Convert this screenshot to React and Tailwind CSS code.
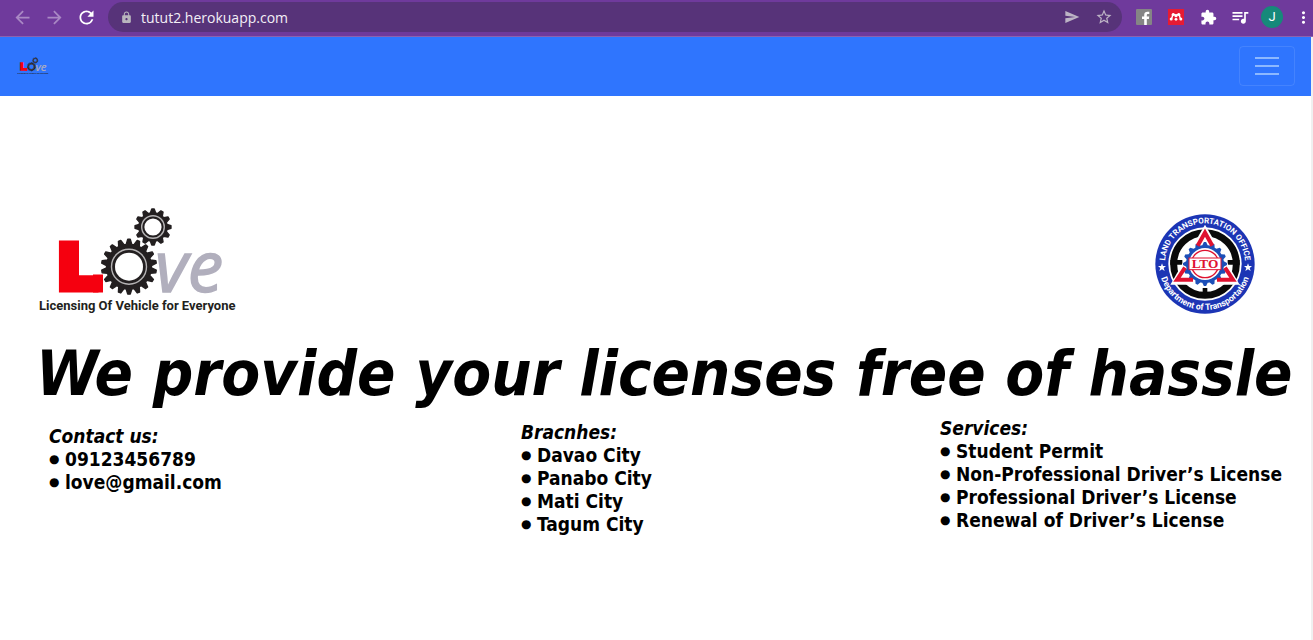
import React, { useId } from "react";
import {
  MdArrowBack, MdArrowForward, MdRefresh, MdLock, MdSend, MdStarBorder,
  MdExtension, MdQueueMusic, MdMoreVert,
} from "react-icons/md";

// Outline of a toothed wheel with tapered teeth.
function gearPath(cx, cy, teeth, outer, inner) {
  const step = (Math.PI * 2) / teeth;
  const points = [];
  for (let i = 0; i < teeth; i++) {
    const a = i * step - Math.PI / 2;
    [[-0.36, inner], [-0.13, outer], [0.13, outer], [0.36, inner]].forEach(([f, r]) => {
      points.push(`${(cx + r * Math.cos(a + f * step)).toFixed(2)} ${(cy + r * Math.sin(a + f * step)).toFixed(2)}`);
    });
  }
  return `M${points.join("L")}Z`;
}

function Gear({ cx, cy, teeth, outer, inner, ring, hole, holeFill }) {
  return (
    <g>
      <path d={gearPath(cx, cy, teeth, outer, inner)} fill="#231f20" stroke="#231f20" strokeWidth="1.4" strokeLinejoin="round" />
      <circle cx={cx} cy={cy} r={ring} fill="none" stroke="#b5b3b4" strokeWidth="1.4" />
      <circle cx={cx} cy={cy} r={hole} fill={holeFill} />
    </g>
  );
}

function LoveLogo({ className, holeFill = "#fff" }) {
  return (
    <svg viewBox="0 0 200 110" className={className} role="img" aria-label="Love">
      <text x="19" y="81" fontFamily="'DejaVu Sans', sans-serif" fontWeight="700" fontSize="59" fill="#f5000f" stroke="#f5000f" strokeWidth="9" strokeLinejoin="miter">L</text>
      <rect x="54" y="67.500" width="10" height="18" fill="#f5000f" />
      <text x="116" y="85" fontFamily="'Open Sans', sans-serif" fontStyle="italic" fontSize="71" fill="#b1afbd" stroke="#b1afbd" strokeWidth="1.5">ve</text>
      <Gear cx={90} cy={59.7} teeth={18} outer={27.5} inner={22.5} ring={17.5} hole={14} holeFill={holeFill} />
      <Gear cx={114} cy={20} teeth={12} outer={18} inner={14.2} ring={11.3} hole={8.6} holeFill={holeFill} />
      <text x="0" y="103" fontFamily="Roboto, sans-serif" fontWeight="700" fontSize="13" fill="#231f20">Licensing Of Vehicle for Everyone</text>
    </svg>
  );
}

function LtoSeal({ className }) {
  const id = useId();
  return (
    <svg viewBox="-150 -150 300 300" className={className} role="img" aria-label="Land Transportation Office">
      <defs>
        <path id={`${id}t`} d="M-118 20A120 120 0 1 1 118 20" />
        <path id={`${id}b`} d="M-138 0A138 138 0 0 0 138 0" />
      </defs>
      <circle r="149" fill="#1c35b5" />
      <circle r="110" fill="#fff" />
      <circle r="94" fill="none" stroke="#0a0a0a" strokeWidth="21" />
      <path d="M-104 -5H-68M68 -5H104" stroke="#0a0a0a" strokeWidth="14" />
      <path d="M0 -118L104 62H-104Z" fill="#fff" />
      <path d="M0 72V94" stroke="#0a0a0a" strokeWidth="14" />
      <path d={gearPath(0, 0, 16, 66, 57)} fill="#1c4fb8" />
      <circle r="48" fill="#fff" />
      <g fill="none" stroke="#df1230" strokeWidth="12">
        <path d="M-22 -55L0 -94L22 -55" />
        <path d="M-60 11L-84 47H-36" />
        <path d="M60 11L84 47H36" />
      </g>
      <circle r="41" fill="none" stroke="#df1230" strokeWidth="4" />
      <rect x="-48" y="-18" width="96" height="35" fill="#fff" stroke="#df1230" strokeWidth="3" />
      <text x="0" y="13" textAnchor="middle" fontFamily="'Liberation Serif', serif" fontWeight="700" fontSize="40" fill="#df1230">LTO</text>
      <g fill="#fff" fontFamily="Roboto, sans-serif" fontWeight="700" textAnchor="middle">
        <text fontSize="24"><textPath href={`#${id}t`} startOffset="50%">LAND TRANSPORTATION OFFICE</textPath></text>
        <text fontSize="26"><textPath href={`#${id}b`} startOffset="50%">Department of Transportation</textPath></text>
      </g>
      <g fill="#fff">
        <path id={`${id}s`} d="M-129 -2l3 8h9l-7 6 3 9-8-5-8 5 3-9-7-6h9z" />
        <use href={`#${id}s`} x="258" />
      </g>
    </svg>
  );
}

function ToolButton({ label, className = "", children }) {
  return (
    <button type="button" aria-label={label} className={`flex h-8 w-8 shrink-0 items-center justify-center ${className}`}>
      {children}
    </button>
  );
}

function BrowserBar() {
  return (
    <header className="flex h-[37px] items-center border-b border-[#8b62ae] bg-[#6f3a9c] pb-0.5 pl-1.5 text-white">
      <ToolButton label="Back" className="text-[#a988c4]"><MdArrowBack size={21} /></ToolButton>
      <ToolButton label="Forward" className="text-[#a988c4]"><MdArrowForward size={21} /></ToolButton>
      <ToolButton label="Reload"><MdRefresh size={21} /></ToolButton>
      <div className="mx-1.5 flex h-[30px] min-w-0 flex-1 items-center rounded-full bg-[#573379] pr-0.5 pl-3">
        <MdLock size={13} className="shrink-0 text-[#b9b5bd]" />
        <input
          aria-label="Address"
          defaultValue="tutut2.herokuapp.com"
          className="ml-2 min-w-0 flex-1 bg-transparent font-['Open_Sans',sans-serif] text-[14px] text-[#f3eff6] outline-none"
        />
        <ToolButton label="Send" className="text-[#bdb4c5]"><MdSend size={16} /></ToolButton>
        <ToolButton label="Bookmark" className="text-[#bdb4c5]"><MdStarBorder size={18} /></ToolButton>
      </div>
      <ToolButton label="Facebook">
        <svg viewBox="0 0 16 16" className="size-4">
          <rect width="16" height="16" rx="1" fill="#858585" />
          <path d="M8.2 16V10H6V7.6h2.2V6c0-2 1.2-3.200 3.200-3.200h1.900v2.300H12c-.9 0-1.200.4-1.200 1.200v1.300h2.400L12.900 10h-2.100v6z" fill="#fff" />
        </svg>
      </ToolButton>
      <ToolButton label="Mendeley">
        <svg viewBox="0 0 16 16" className="size-4">
          <rect width="16" height="16" fill="#e61b33" />
          <path d="M3.200 10Q4.600 8.500 4.600 5.600M12.800 10Q11.400 8.500 11.400 5.600M4.800 5.400Q6.400 5 8 7Q9.600 5 11.200 5.400" fill="none" stroke="#fff" strokeWidth="1.500" />
          <g fill="#fff">
            <circle cx="5.200" cy="5.500" r="1.500" /><circle cx="10.800" cy="5.500" r="1.500" /><circle cx="8" cy="6.700" r="1.600" />
            <circle cx="3.200" cy="9.900" r="1.500" /><circle cx="12.800" cy="9.900" r="1.500" /><circle cx="8" cy="10.300" r="1.400" />
          </g>
        </svg>
      </ToolButton>
      <ToolButton label="Extensions"><MdExtension size={17} /></ToolButton>
      <ToolButton label="Media"><MdQueueMusic size={20} /></ToolButton>
      <ToolButton label="Profile">
        <span className="flex size-[22px] items-center justify-center rounded-full bg-[#16897a] font-[Roboto,sans-serif] text-[13px]">J</span>
      </ToolButton>
      <button type="button" aria-label="Menu" className="flex h-8 w-[25px] shrink-0 items-center justify-end">
        <MdMoreVert size={19} />
      </button>
    </header>
  );
}

function Navbar() {
  return (
    <nav className="flex items-center justify-between bg-[#2f75fe] pt-[9px] pr-4 pb-2.5 pl-[17px]">
      <a href="#home" aria-label="Home"><LoveLogo holeFill="#2f75fe" className="h-[18px] w-8" /></a>
      <button
        type="button"
        aria-label="Toggle navigation"
        className="flex h-10 w-14 flex-col items-center justify-center gap-1.5 rounded border border-white/10"
      >
        <span className="h-0.5 w-6 bg-[#8cb8ff]" />
        <span className="h-0.5 w-6 bg-[#8cb8ff]" />
        <span className="h-0.5 w-6 bg-[#8cb8ff]" />
      </button>
    </nav>
  );
}

function InfoList({ title, items, className = "" }) {
  return (
    <section className={`text-[19px] leading-[23px] font-bold whitespace-nowrap ${className}`}>
      <h2 className="italic">{title}</h2>
      <ul>
        {items.map((item) => (
          <li key={item} className="flex items-center">
            <span className="w-4 font-['DejaVu_Sans',sans-serif] text-[12px] font-normal">●</span>
            {item}
          </li>
        ))}
      </ul>
    </section>
  );
}

export default function App() {
  return (
    <div className="flex min-h-screen flex-col overflow-hidden bg-white">
      <BrowserBar />
      <div className="flex-1 border-r-2 border-[#f0f0f0]">
        <Navbar />
        <main className="pt-[111px] pr-5 pl-9 font-['DejaVu_Sans_Condensed','DejaVu_Sans',sans-serif] text-black">
          <div className="flex items-start justify-between pr-9 pl-[3px]">
            <LoveLogo className="h-[110px] w-[200px]" />
            <LtoSeal className="mt-[7px] size-[100px]" />
          </div>
          <h1 className="mt-[17px] text-[63px] leading-[80px] font-bold whitespace-nowrap italic">
            We provide your licenses free of hassle
          </h1>
          <div className="mt-[3px] grid grid-cols-[472fr_419fr_351fr] pl-[13px]">
            <InfoList title="Contact us:" items={["09123456789", "love@gmail.com"]} className="pt-2" />
            <InfoList title="Bracnhes:" items={["Davao City", "Panabo City", "Mati City", "Tagum City"]} className="pt-1" />
            <InfoList
              title="Services:"
              items={["Student Permit", "Non-Professional Driver’s License", "Professional Driver’s License", "Renewal of Driver’s License"]}
            />
          </div>
        </main>
      </div>
    </div>
  );
}
